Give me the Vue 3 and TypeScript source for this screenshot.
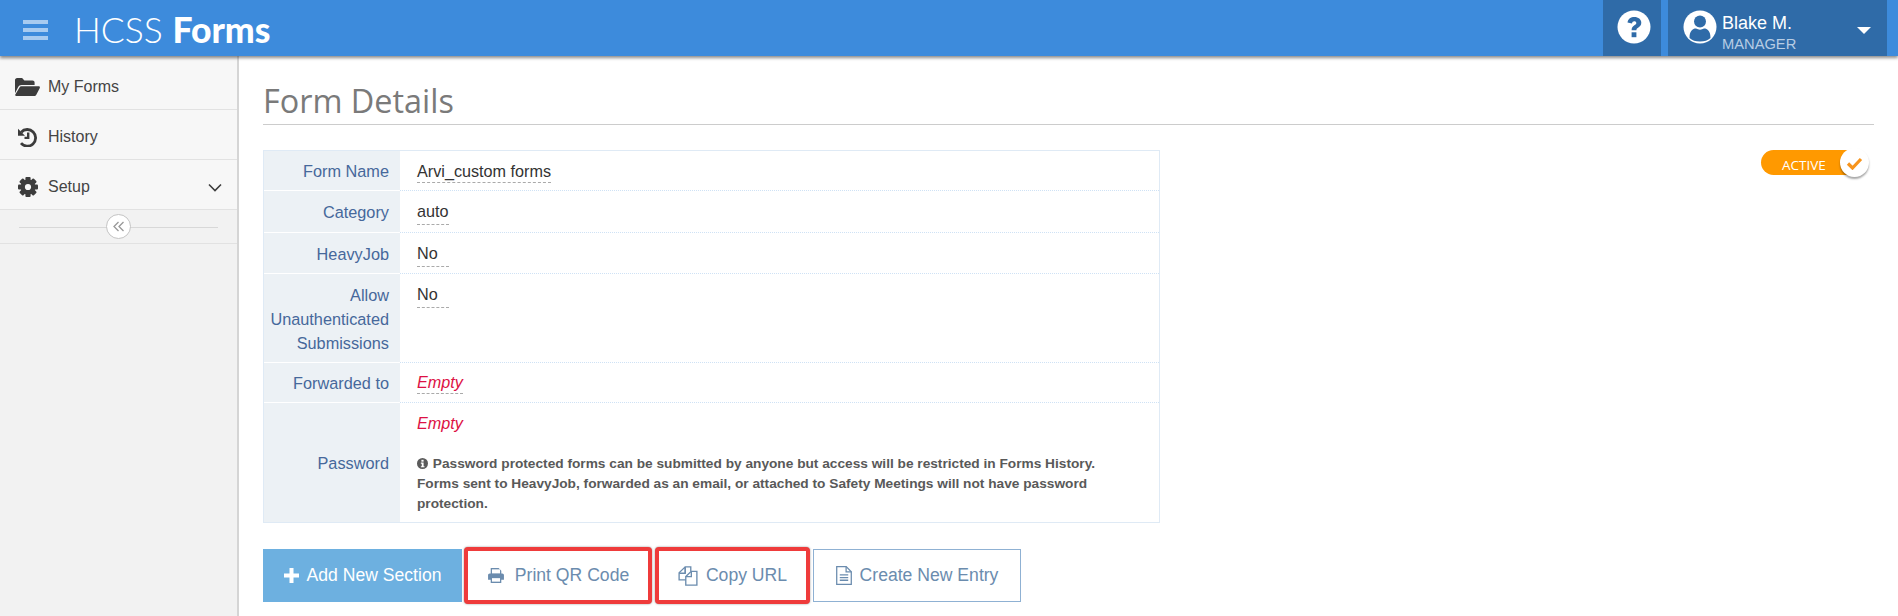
<script setup lang="ts">
interface Row {
  label: string[]
  value: string
  empty?: boolean
  cls: string
}

const rows: Row[] = [
  { label: ['Form Name'], value: 'Arvi_custom forms', cls: 'r-name' },
  { label: ['Category'], value: 'auto', cls: 'r-cat' },
  { label: ['HeavyJob'], value: 'No', cls: 'r-heavy' },
  { label: ['Allow', 'Unauthenticated', 'Submissions'], value: 'No', cls: 'r-allow' },
  { label: ['Forwarded to'], value: 'Empty', empty: true, cls: 'r-fwd' },
]
</script>

<template>
  <div class="page">
    <header class="topbar">
      <div class="burger"><i></i><i></i><i></i></div>
      <div class="logo">HCSS <b>Forms</b></div>
      <div class="help">
        <svg width="34" height="34" viewBox="0 0 34 34">
          <circle cx="17" cy="17" r="16.5" fill="#fff" />
          <path d="M10.5 12.5C11 8.8 13.8 7 17.4 7c3.900 0 6.900 2.300 6.900 5.800 0 2.600-1.500 3.900-3.200 5-1.200.8-1.700 1.300-1.700 2.500h-4.800c0-2.700 1-3.900 2.800-5.100 1.200-.8 1.900-1.300 1.900-2.300 0-1-.9-1.600-2-1.600-1.300 0-2 .7-2.300 2.100z" fill="#2f6ba8" />
          <rect x="14.600" y="22.300" width="4.800" height="4.900" fill="#2f6ba8" />
        </svg>
      </div>
      <div class="user">
        <svg class="avatar" width="34" height="34" viewBox="0 0 34 34">
          <circle cx="17" cy="17" r="16.500" fill="#fff" />
          <circle cx="17" cy="11.500" r="6" fill="#2f6ba8" />
          <path d="M6.500 28c0-7 3-9.500 6.500-9.500 2.500 1.500 5.500 1.500 8 0 3.500 0 6.500 2.500 6.500 9.500-2.500 2.500-6 3.500-10.500 3.500S9 30.500 6.500 28z" fill="#2f6ba8" />
        </svg>
        <div class="who">
          <div class="who-name">Blake M.</div>
          <div class="who-role">MANAGER</div>
        </div>
        <span class="caret"></span>
      </div>
    </header>

    <div class="body">
      <aside class="side">
        <a class="nav">
          <svg class="nav-ico" width="25" height="20" viewBox="0 0 25 20">
            <path d="M0 3.200C0 2 .9 1 2.100 1h5l2.300 2.600h8.100c1.200 0 2.100.9 2.100 2.100V8H6.500C5 8 3.800 8.800 3.200 10.100L0 16.200z" fill="#3c3c3c" />
            <path d="M6.300 9.300h17.400c.9 0 1.500.9 1.100 1.700l-3.500 6.800c-.4.800-1.200 1.200-2 1.200H1.100c-.8 0-1.200-.7-.9-1.300L4.500 10.400c.4-.7 1-1.100 1.800-1.100z" fill="#3c3c3c" />
          </svg>
          <span>My Forms</span>
        </a>
        <a class="nav">
          <svg class="nav-ico" width="25" height="20" viewBox="0 0 25 20">
            <path d="M6.200 5.200A8.300 8.300 0 1 1 6 16.200" fill="none" stroke="#3c3c3c" stroke-width="2.800" />
            <path d="M3 1.800l7 7H3z" fill="#3c3c3c" />
            <path d="M13.200 5.500v5.400H9.500" fill="none" stroke="#3c3c3c" stroke-width="2.400" />
          </svg>
          <span>History</span>
        </a>
        <a class="nav">
          <svg class="nav-ico" width="25" height="20" viewBox="0 0 25 20">
            <g transform="translate(13 10)" fill="#3c3c3c">
              <rect v-for="a in [0, 45, 90, 135]" :key="a" x="-2.600" y="-10" width="5.200" height="20" rx="1" :transform="`rotate(${a})`" />
              <circle r="7.400" />
            </g>
            <circle cx="13" cy="10" r="3.100" fill="#f7f7f7" />
          </svg>
          <span>Setup</span>
          <svg class="chev" width="14" height="9" viewBox="0 0 14 9">
            <path d="M1 1.500l6 6 6-6" fill="none" stroke="#3c3c3c" stroke-width="1.600" />
          </svg>
        </a>
        <div class="collapse">
          <span class="collapse-line"></span>
          <span class="collapse-btn">
            <svg width="12" height="11" viewBox="0 0 12 11">
              <path d="M5.500 1L1 5.500 5.500 10M10.500 1L6 5.500 10.500 10" fill="none" stroke="#999" stroke-width="1.300" />
            </svg>
          </span>
        </div>
      </aside>

      <main class="main">
        <h1 class="title">Form Details</h1>

        <div class="content">
          <div class="details">
            <div v-for="r in rows" :key="r.cls" class="row" :class="r.cls">
              <div class="lbl">
                <div v-for="l in r.label" :key="l">{{ l }}</div>
              </div>
              <div class="val">
                <span class="edit" :class="{ empty: r.empty, wide: r.value.length < 5 && !r.empty }">{{ r.value }}</span>
              </div>
            </div>
            <div class="row r-pass">
              <div class="lbl lbl-mid">Password</div>
              <div class="val">
                <span class="empty plain">Empty</span>
                <p class="note">
                  <svg width="11" height="11" viewBox="0 0 12 12" class="info">
                    <circle cx="6" cy="6" r="6" fill="#5b5b5b" />
                    <rect x="4.800" y="2" width="2.400" height="2" fill="#fff" />
                    <path d="M4.200 5h3v4h1v1.200H4.200V9h1V6.200h-1z" fill="#fff" />
                  </svg>
                  Password protected forms can be submitted by anyone but access will be restricted in Forms History. Forms sent to HeavyJob, forwarded as an email, or attached to Safety Meetings will not have password protection.
                </p>
              </div>
            </div>
          </div>

          <div class="toggle">
            <span class="toggle-text">ACTIVE</span>
            <span class="knob">
              <svg width="17" height="14" viewBox="0 0 17 14">
                <path d="M2 7.500l4.500 4.500L15 3" fill="none" stroke="#f7941d" stroke-width="3.200" />
              </svg>
            </span>
          </div>
        </div>

        <div class="actions">
          <button class="btn primary">
            <svg width="15" height="15" viewBox="0 0 15 15"><path d="M5.500 0h4v5.500H15v4H9.500V15h-4V9.500H0v-4h5.500z" fill="#fff" /></svg>
            Add New Section
          </button>
          <button class="btn marked m-print">
            <svg width="18" height="17" viewBox="0 0 17 16">
              <path d="M3.500 6V1h7.500l2.500 2.500V6M1 7.500c0-.8.700-1.500 1.500-1.500h12c.8 0 1.500.7 1.500 1.500V12h-2.500v3h-10v-3H1z" fill="#6b8cae" />
              <rect x="4.700" y="2.200" width="7.600" height="3.800" fill="#fff" />
              <rect x="4.700" y="10.500" width="7.600" height="3.300" fill="#fff" />
            </svg>
            Print QR Code
          </button>
          <button class="btn marked m-copy">
            <svg width="20" height="20" viewBox="0 0 18 18" fill="none" stroke="#6b8cae" stroke-width="1.200">
              <path d="M6.500 6.500V.8h5v4M6.500.8L1 6v6.500h6" />
              <path d="M1 6.500h5.500V1" />
              <path d="M12 4.800L7 9.500v7.700h10V4.800z" />
              <path d="M7 9.500h5V4.800" />
            </svg>
            Copy URL
          </button>
          <button class="btn outline">
            <svg width="16" height="19" viewBox="0 0 15 18" fill="none" stroke="#6b8cae" stroke-width="1.200">
              <path d="M.6.600h9l4.800 4.800v12H.6z" />
              <path d="M9.500.6v5h5M3.500 8.500h8M3.500 11h8M3.500 13.500h8" />
            </svg>
            Create New Entry
          </button>
        </div>
      </main>
    </div>
  </div>
</template>

<style>
html, body { margin: 0; padding: 0; background: #fff; }
</style>

<style scoped>
.page {
  width: 1898px;
  height: 616px;
  overflow: hidden;
  display: flex;
  flex-direction: column;
  font-family: "Liberation Sans", Arial, sans-serif;
  font-size: 16px;
  color: #333;
}

.topbar {
  height: 56px;
  flex: none;
  background: #3d8bdc;
  display: flex;
  align-items: stretch;
  box-shadow: 0 2px 3px rgba(0, 0, 0, 0.45);
  position: relative;
  z-index: 2;
}
.burger {
  width: 25px;
  margin: 20px 0 0 23px;
  display: flex;
  flex-direction: column;
  gap: 4px;
}
.burger i {
  display: block;
  height: 4px;
  background: #a8cbf0;
}
.logo {
  margin-left: 26px;
  color: #fff;
  font-family: Lato, "Liberation Sans", sans-serif;
  font-size: 35.500px;
  font-weight: 300;
  line-height: 60px;
}
.logo b { font-weight: 900; }
.help {
  margin-left: auto;
  width: 58px;
  padding: 0 0 3px 3px;
  box-sizing: border-box;
  background: #2f6ba8;
  display: flex;
  align-items: center;
  justify-content: center;
}
.user {
  width: 219px;
  margin: 0 11px 0 7px;
  background: #2f6ba8;
  display: flex;
  align-items: flex-start;
  position: relative;
}
.avatar { margin: 10px 5px 0 15px; }
.who { color: #fff; margin-top: 12px; }
.who-name { font-size: 18px; line-height: 22px; }
.who-role { font-size: 14.700px; line-height: 20px; color: #b7cde4; }
.caret {
  position: absolute;
  right: 16px;
  top: 27px;
  border-left: 7px solid transparent;
  border-right: 7px solid transparent;
  border-top: 7px solid #fff;
}

.body { flex: 1; display: flex; min-height: 0; }

.side {
  width: 237px;
  flex: none;
  padding-top: 4px;
  background: #f2f2f2;
  border-right: 2px solid #d5d5d5;
  box-sizing: content-box;
}
.nav {
  height: 50px;
  box-sizing: border-box;
  padding: 5px 0 0 15px;
  display: flex;
  align-items: center;
  background: #f7f7f7;
  border-bottom: 1px solid #e2e2e2;
  color: #444;
  position: relative;
}
.nav-ico { flex: none; }
.nav span { margin-left: 8px; font-size: 16px; }
.chev { position: absolute; right: 15px; top: 23px; }
.collapse {
  height: 33px;
  border-bottom: 1px solid #e2e2e2;
  display: flex;
  align-items: center;
  justify-content: center;
  position: relative;
}
.collapse-line {
  position: absolute;
  left: 19px;
  right: 19px;
  top: 17px;
  height: 1px;
  background: #d8d8d8;
}
.collapse-btn {
  width: 25px;
  height: 25px;
  box-sizing: border-box;
  border: 1px solid #c4c4c4;
  border-radius: 50%;
  background: #fff;
  position: relative;
  display: flex;
  align-items: center;
  justify-content: center;
}

.main {
  flex: 1;
  padding: 0 24px 0 24px;
  min-width: 0;
}
.title {
  margin: 26px 0 0;
  height: 42px;
  border-bottom: 1px solid #ccc;
  font-family: "Open Sans", "Noto Sans", sans-serif;
  font-size: 32.400px;
  font-weight: 400;
  line-height: 37px;
  color: #7a7a7a;
}
.content {
  margin-top: 25px;
  display: flex;
  justify-content: space-between;
  align-items: flex-start;
}

.details {
  width: 897px;
  box-sizing: border-box;
  border: 1px solid #dfeaf5;
}
.row {
  display: grid;
  grid-template-columns: 136px 1fr;
  border-bottom: 1px dotted #cfe2f5;
}
.r-name { height: 39px; }
.r-cat { height: 41px; }
.r-heavy { height: 40px; }
.r-allow { height: 88px; }
.r-fwd { height: 39px; }
.r-pass { height: auto; border-bottom: 0; }
.lbl {
  background: #ecf1f5;
  border-bottom: 1px solid #fff;
  margin-bottom: -1px;
  padding: 9px 11px 0 0;
  text-align: right;
  color: #46689b;
  font-size: 16.300px;
  line-height: 24px;
}
.r-name .lbl, .r-fwd .lbl { padding-top: 8px; }
.lbl-mid {
  display: flex;
  align-items: center;
  justify-content: flex-end;
  padding-top: 0;
  margin-bottom: 0;
  border-bottom: 0;
}
.val { padding: 8px 24px 0 17px; font-size: 16.200px; line-height: 24px; color: #333; }
.r-fwd .val { padding-top: 7px; }
.edit {
  display: inline-block;
  border-bottom: 1px dashed #aaa;
  line-height: 21px;
  padding-top: 0;
}
.edit.wide { min-width: 32px; }
.r-cat .edit, .r-heavy .edit, .r-allow .edit { line-height: 25px; }
.empty { color: #dd1144; font-style: italic; }
.plain { display: block; }
.note {
  margin: 19px 0 8px;
  font-size: 13.700px;
  font-weight: 700;
  line-height: 20px;
  color: #595959;
}
.info { vertical-align: -1px; margin-right: 1px; }

.toggle {
  width: 107px;
  height: 25px;
  margin: 0 6px 0 0;
  padding-left: 21px;
  box-sizing: border-box;
  border-radius: 13px;
  background: #ff9900;
  color: #fff;
  font-family: "Open Sans", "Noto Sans", sans-serif;
  font-size: 13.500px;
  line-height: 30px;
  position: relative;
}
.knob {
  position: absolute;
  right: -1px;
  top: -2px;
  width: 29px;
  height: 29px;
  border-radius: 50%;
  background: #fff;
  box-shadow: 0 2px 2px rgba(0, 0, 0, 0.35);
  display: flex;
  align-items: center;
  justify-content: center;
}

.actions {
  margin-top: 24px;
  display: flex;
  align-items: center;
}
.btn {
  height: 53px;
  box-sizing: border-box;
  display: flex;
  align-items: center;
  justify-content: center;
  gap: 8px;
  font-family: inherit;
  font-size: 17.600px;
  color: #6b8cae;
  background: #fff;
  border: 1px solid transparent;
  padding: 0;
}
.primary {
  width: 199px;
  background: #6db0e0;
  color: #fff;
  border-color: #6db0e0;
}
.marked {
  height: 57px;
  border: 4px solid #ef3b3b;
  border-radius: 4px;
  box-shadow: 0 0 2px rgba(60, 60, 60, 0.6);
}
.m-print { width: 188px; margin-left: 2px; gap: 10px; }
.m-copy { width: 155px; margin-left: 3px; }
.outline {
  width: 208px;
  margin-left: 3px;
  border-color: #8fb1d3;
}
</style>
